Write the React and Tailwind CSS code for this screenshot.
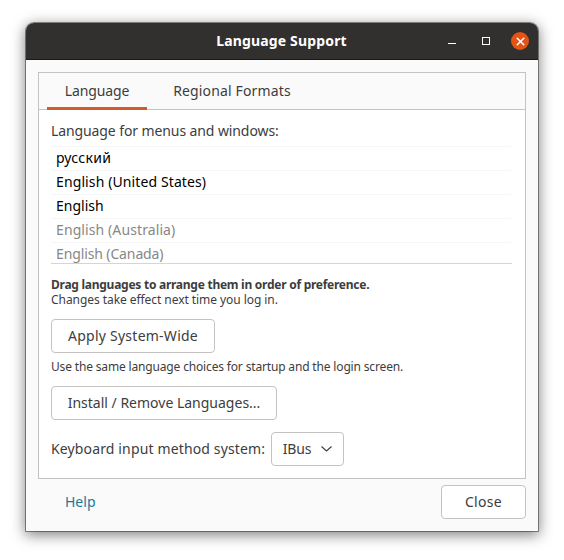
import { X } from "lucide-react";

const languages = [
  { name: "русский", active: true, tracking: "tracking-[0.27px]" },
  { name: "English (United States)", active: true, tracking: "tracking-[0.11px]" },
  { name: "English", active: true, tracking: "tracking-[0px]" },
  { name: "English (Australia)", active: false, tracking: "tracking-[0.1px]" },
  { name: "English (Canada)", active: false, tracking: "tracking-[-0.12px]" },
];

function Button({ className = "", children }) {
  return (
    <button
      className={
        "flex h-[34px] shrink-0 items-center justify-center whitespace-nowrap rounded border border-[#c4c3c2] bg-white pb-px " +
        className
      }
    >
      {children}
    </button>
  );
}

function TitleBar() {
  return (
    <header className="grid h-[37px] shrink-0 grid-cols-[1fr_auto_1fr] items-center border-b border-[#1b1919] bg-[#322f2f] pl-2 pr-[9px] text-white">
      <span />
      <h1 className="text-sm font-bold tracking-[0.16px]">Language Support</h1>
      <div className="flex items-center justify-end">
        <button aria-label="Minimize" className="mr-[26px] mt-[5px] h-px w-2 bg-white" />
        <button aria-label="Maximize" className="mr-[21px] size-2 border border-white" />
        <button aria-label="Close window" className="flex size-[18px] items-center justify-center rounded-full bg-[#e35314]">
          <X size={13} strokeWidth={2.8} />
        </button>
      </div>
    </header>
  );
}

export default function App() {
  return (
    <div className="h-[560px] w-[564px] overflow-hidden bg-white px-[26px] pt-[23px] font-['Noto_Sans',sans-serif] text-sm text-[#3d3d3d]">
      <main className="flex h-[508px] w-[512px] flex-col overflow-hidden rounded-t-lg bg-[#fafafa] shadow-[0_0_0_1px_rgba(0,0,0,0.4),0_3px_14px_1px_rgba(0,0,0,0.5)]">
        <TitleBar />
        <section className="mx-3 mt-3 flex h-[407px] shrink-0 flex-col border border-[#c4c3c2] bg-white">
          <nav className="flex h-[37px] shrink-0 border-b border-[#c4c3c2] bg-[#fafafa] pl-2">
            <div className="flex h-[37px] w-[100px] items-center justify-center border-b-[3px] border-[#d35a29] pt-0.5">
              <span className="tracking-[-0.12px]">Language</span>
            </div>
            <div className="flex h-[34px] w-[170px] items-center justify-center pt-0.5">
              <span className="whitespace-nowrap tracking-[0.14px]">Regional Formats</span>
            </div>
          </nav>
          <div className="flex flex-col px-3 pt-3">
            <p className="h-6 leading-[18px] tracking-[-0.1px]">Language for menus and windows:</p>
            <ul className="h-[118px] w-[461px] shrink-0 overflow-hidden border-b border-[#d5d5d5] pr-px">
              {languages.map((language) => (
                <li
                  key={language.name}
                  className={"flex h-6 items-center border-t border-[#f6f6f6] pb-0.5 pl-[5px] " + (language.active ? "text-black" : "text-[#878787]")}
                >
                  <span className={language.tracking}>{language.name}</span>
                </li>
              ))}
            </ul>
            <p className="mt-[13px] h-[15px] text-xs font-bold leading-[15px] tracking-[-0.26px]">Drag languages to arrange them in order of preference.</p>
            <p className="h-[15px] text-xs leading-[15px] tracking-[-0.06px]">Changes take effect next time you log in.</p>
            <Button className="mt-3 w-[164px] tracking-[0.25px]">Apply System-Wide</Button>
            <p className="mt-1.5 h-4 text-xs leading-4 tracking-[-0.16px]">Use the same language choices for startup and the login screen.</p>
            <Button className="mt-[11px] w-[226px]">Install / Remove Languages...</Button>
            <div className="mt-3 flex items-center">
              <span className="w-[220px] whitespace-nowrap pb-px tracking-[0.14px]">Keyboard input method system:</span>
              <Button className="w-[73px] gap-2.5">
                <span className="tracking-[-0.2px]">IBus</span>
                <svg className="mt-px" width="11" height="6" viewBox="0 0 11 6" fill="none" stroke="#3d3d3d" strokeWidth="1.1">
                  <path d="M0.5 0.5 5.5 5 10.5 0.5" />
                </svg>
              </Button>
            </div>
          </div>
        </section>
        <footer className="flex items-center justify-between pl-[39px] pr-3 pt-1.5">
          <a className="pb-px text-[#19799d]">Help</a>
          <Button className="w-[85px] tracking-[0.3px]">Close</Button>
        </footer>
      </main>
    </div>
  );
}
